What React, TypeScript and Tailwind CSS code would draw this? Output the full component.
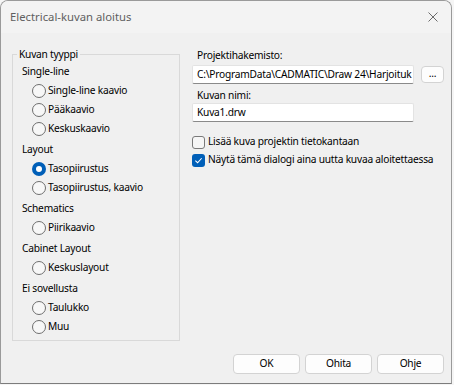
import React from "react";

const font = { fontFamily: '"Noto Sans", "Open Sans", Arial, sans-serif' };

function Radio({ label, checked = false }: { label: string; checked?: boolean }) {
  return (
    <div className="flex h-[19px] items-center pl-[19px]">
      {checked ? (
        <span className="flex h-[14px] w-[14px] items-center justify-center rounded-full bg-[#005fb8]">
          <span className="h-[6px] w-[6px] rounded-full bg-white" />
        </span>
      ) : (
        <span className="h-[14px] w-[14px] rounded-full border border-[#6e6e6e] bg-[#f7f7f7]" />
      )}
      <span className="ml-[2px]">{label}</span>
    </div>
  );
}

function Section({ title, items, checked }: { title: string; items: string[]; checked?: string }) {
  return (
    <div className="mb-[3px]">
      <div className="flex h-[18px] items-center pl-[9px]">{title}</div>
      {items.map((it) => (
        <Radio key={it} label={it} checked={it === checked} />
      ))}
    </div>
  );
}

function Checkbox({ label, checked = false }: { label: string; checked?: boolean }) {
  return (
    <div className="flex h-[18px] items-center whitespace-nowrap">
      {checked ? (
        <span className="flex h-[13px] w-[13px] shrink-0 items-center justify-center rounded-[3px] bg-[#005fb8]">
          <svg width="9" height="9" viewBox="0 0 10 10" fill="none">
            <path d="M1.5 5.2 L4 7.5 L8.5 2.5" stroke="white" strokeWidth="1.2" />
          </svg>
        </span>
      ) : (
        <span className="h-[13px] w-[13px] shrink-0 rounded-[3px] border border-[#7a7a7a] bg-[#f6f6f6]" />
      )}
      <span className="ml-[3px]">{label}</span>
    </div>
  );
}

function Button({ label }: { label: string }) {
  return (
    <button className="flex h-[20px] w-[67px] items-center justify-center rounded-[4px] border border-[#d3d3d3] bg-[#fdfdfd] text-black">
      {label}
    </button>
  );
}

export default function App() {
  return (
    <div className="h-[385px] w-[454px] bg-[#f5f5f5] text-[10.2px] tracking-[-0.22px] text-black" style={font}>
      <div className="flex h-[384px] w-[452px] flex-col overflow-hidden rounded-t-[8px] border border-[#9a9a9a] border-b-[#7c7c7c] bg-[#f0f0f0]">
        <div className="flex h-[32px] shrink-0 items-center justify-between bg-[#f3f3f3] pl-[9px] pr-[13px]">
          <span className="text-[11.3px] tracking-normal text-[#5f5f5f]">Electrical-kuvan aloitus</span>
          <svg width="10" height="10" viewBox="0 0 10 10">
            <path d="M0.5 0.5 L9.5 9.5 M9.5 0.5 L0.5 9.5" stroke="#6a6a6a" strokeWidth="1" />
          </svg>
        </div>

        <div className="flex flex-1 flex-col">
          <div className="flex pl-[11px] pt-[13px]">
            <fieldset className="h-[295px] w-[168px] border border-[#d9d9d9] px-0 pt-0">
              <legend className="ml-[4px] px-[2px] leading-[16px]">Kuvan tyyppi</legend>
              <div className="pt-[1px]">
                <Section title="Single-line" items={["Single-line kaavio", "Pääkaavio", "Keskuskaavio"]} />
                <Section title="Layout" items={["Tasopiirustus", "Tasopiirustus, kaavio"]} checked="Tasopiirustus" />
                <Section title="Schematics" items={["Piirikaavio"]} />
                <Section title="Cabinet Layout" items={["Keskuslayout"]} />
                <Section title="Ei sovellusta" items={["Taulukko", "Muu"]} />
              </div>
            </fieldset>

            <div className="ml-[12px] flex w-[252px] flex-col pt-[1px]">
              <div className="pl-[5px] leading-[16px]">Projektihakemisto:</div>
              <div className="mt-[2px] flex items-center">
                <div className="flex h-[19px] w-[222px] items-center overflow-hidden whitespace-nowrap rounded-[2px] border border-[#e3e3e3] border-b-[#8a8a8a] bg-white pl-[4px]">
                  C:\ProgramData\CADMATIC\Draw 24\Harjoituk
                </div>
                <button className="ml-[7px] flex h-[17px] w-[23px] items-center justify-center rounded-[4px] border border-[#d3d3d3] bg-[#fdfdfd] pb-[3px] leading-none">
                  ...
                </button>
              </div>
              <div className="mt-[3px] pl-[5px] leading-[16px]">Kuvan nimi:</div>
              <div className="flex h-[19px] w-[222px] items-center rounded-[2px] border border-[#e3e3e3] border-b-[#8a8a8a] bg-white pl-[4px]">
                Kuva1.drw
              </div>
              <div className="mt-[11px]">
                <Checkbox label="Lisää kuva projektin tietokantaan" />
                <Checkbox label="Näytä tämä dialogi aina uutta kuvaa aloitettaessa" checked />
              </div>
            </div>
          </div>

          <div className="mt-auto flex justify-end gap-[5px] pb-[9px] pr-[7px]">
            <Button label="OK" />
            <Button label="Ohita" />
            <Button label="Ohje" />
          </div>
        </div>
      </div>
    </div>
  );
}
